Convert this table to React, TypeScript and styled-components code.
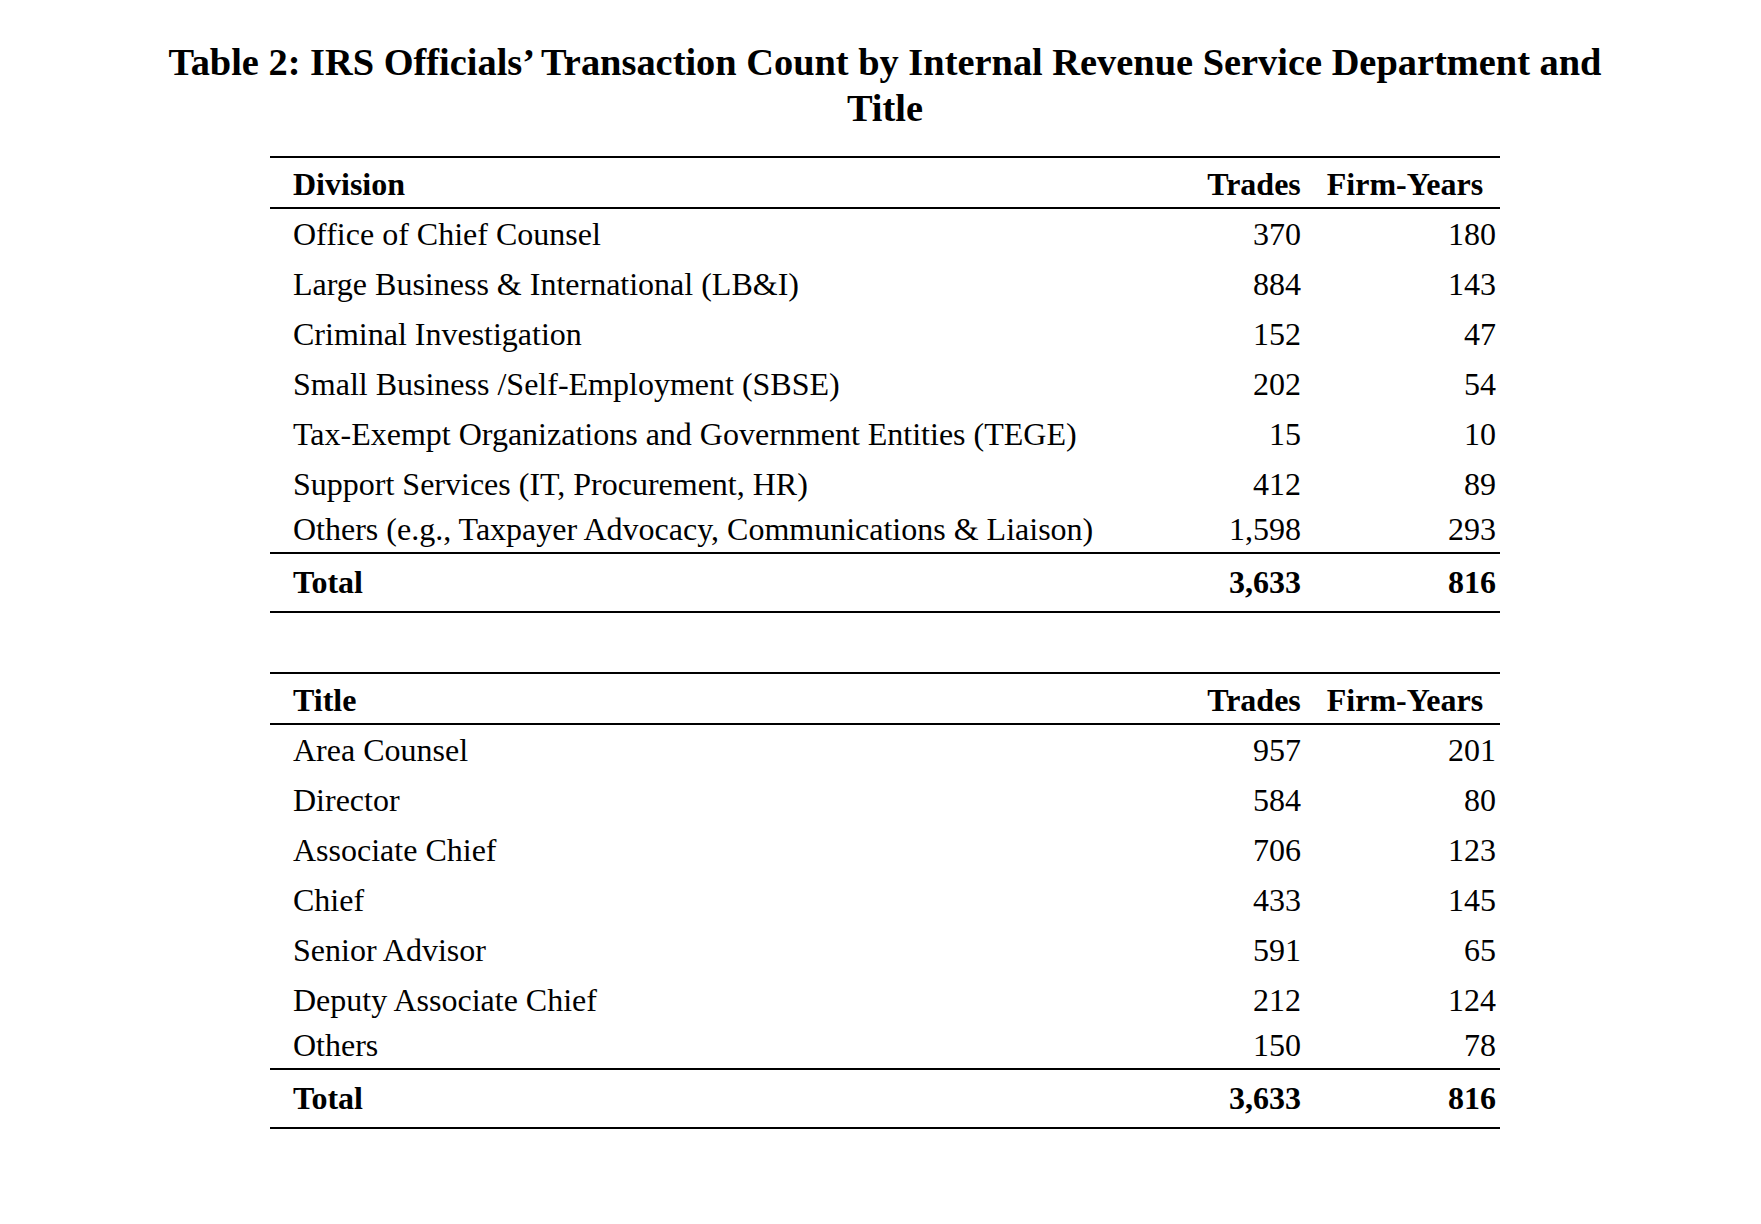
import React from "react";
import styled, { createGlobalStyle } from "styled-components";

const GlobalStyle = createGlobalStyle`
  html, body { margin: 0; padding: 0; background: #fff; }
  body {
    font-family: "Liberation Serif", "Times New Roman", serif;
    color: #000;
  }
`;

const Page = styled.main`
  display: flex;
  flex-direction: column;
  align-items: center;
  padding: 39px 0 60px 9px;
`;

const Title = styled.h1`
  margin: 0;
  max-width: 1470px;
  font-size: 38.4px;
  line-height: 46px;
  font-weight: 700;
  text-align: center;
`;

const Table = styled.table<{ $gap: number }>`
  width: 1230px;
  margin-top: ${(p) => p.$gap}px;
  border-collapse: collapse;
  table-layout: fixed;
  font-size: 32px;
  line-height: 34px;
  border-top: 2px solid #000;
  border-bottom: 2px solid #000;
`;

const HeadRow = styled.tr`
  border-bottom: 2px solid #000;
`;

const TotalRow = styled.tr`
  border-top: 2px solid #000;
`;

type RowKind = "body" | "last" | "total";

const padY: Record<RowKind, [number, number]> = {
  body: [8, 8],
  last: [3, 6],
  total: [11, 12],
};

const HeadCell = styled.th<{ $align: "left" | "center" }>`
  padding: 9px 0 6px ${(p) => (p.$align === "left" ? "23px" : "0")};
  text-align: ${(p) => p.$align};
  font-weight: 700;
  white-space: nowrap;
`;

const LabelCell = styled.td<{ $kind: RowKind }>`
  padding: ${(p) => padY[p.$kind][0]}px 0 ${(p) => padY[p.$kind][1]}px 23px;
  text-align: left;
  font-weight: ${(p) => (p.$kind === "total" ? 700 : 400)};
  white-space: nowrap;
`;

const NumCell = styled.td<{ $kind: RowKind; $pad: number }>`
  padding: ${(p) => padY[p.$kind][0]}px ${(p) => p.$pad}px ${(p) => padY[p.$kind][1]}px 0;
  text-align: right;
  font-weight: ${(p) => (p.$kind === "total" ? 700 : 400)};
  white-space: nowrap;
`;

type Row = [string, string, string];

const divisions: Row[] = [
  ["Office of Chief Counsel", "370", "180"],
  ["Large Business & International (LB&I)", "884", "143"],
  ["Criminal Investigation", "152", "47"],
  ["Small Business /Self-Employment (SBSE)", "202", "54"],
  ["Tax-Exempt Organizations and Government Entities (TEGE)", "15", "10"],
  ["Support Services (IT, Procurement, HR)", "412", "89"],
  ["Others (e.g., Taxpayer Advocacy, Communications & Liaison)", "1,598", "293"],
];

const titles: Row[] = [
  ["Area Counsel", "957", "201"],
  ["Director", "584", "80"],
  ["Associate Chief", "706", "123"],
  ["Chief", "433", "145"],
  ["Senior Advisor", "591", "65"],
  ["Deputy Associate Chief", "212", "124"],
  ["Others", "150", "78"],
];

const TRADES_PAD = 9;
const FIRMS_PAD = 4;

function CountTable({ heading, rows, gap }: { heading: string; rows: Row[]; gap: number }) {
  return (
    <Table $gap={gap}>
      <colgroup>
        <col style={{ width: "928px" }} />
        <col style={{ width: "112px" }} />
        <col style={{ width: "190px" }} />
      </colgroup>
      <thead>
        <HeadRow>
          <HeadCell $align="left">{heading}</HeadCell>
          <HeadCell $align="center">Trades</HeadCell>
          <HeadCell $align="center">Firm-Years</HeadCell>
        </HeadRow>
      </thead>
      <tbody>
        {rows.map(([label, trades, firms], i) => {
          const kind: RowKind = i === rows.length - 1 ? "last" : "body";
          return (
            <tr key={label}>
              <LabelCell $kind={kind}>{label}</LabelCell>
              <NumCell $kind={kind} $pad={TRADES_PAD}>{trades}</NumCell>
              <NumCell $kind={kind} $pad={FIRMS_PAD}>{firms}</NumCell>
            </tr>
          );
        })}
      </tbody>
      <tfoot>
        <TotalRow>
          <LabelCell $kind="total">Total</LabelCell>
          <NumCell $kind="total" $pad={TRADES_PAD}>3,633</NumCell>
          <NumCell $kind="total" $pad={FIRMS_PAD}>816</NumCell>
        </TotalRow>
      </tfoot>
    </Table>
  );
}

export default function App() {
  return (
    <>
      <GlobalStyle />
      <Page>
        <Title>
          Table 2: IRS Officials’ Transaction Count by Internal Revenue Service Department and Title
        </Title>
        <CountTable heading="Division" rows={divisions} gap={25} />
        <CountTable heading="Title" rows={titles} gap={59} />
      </Page>
    </>
  );
}
